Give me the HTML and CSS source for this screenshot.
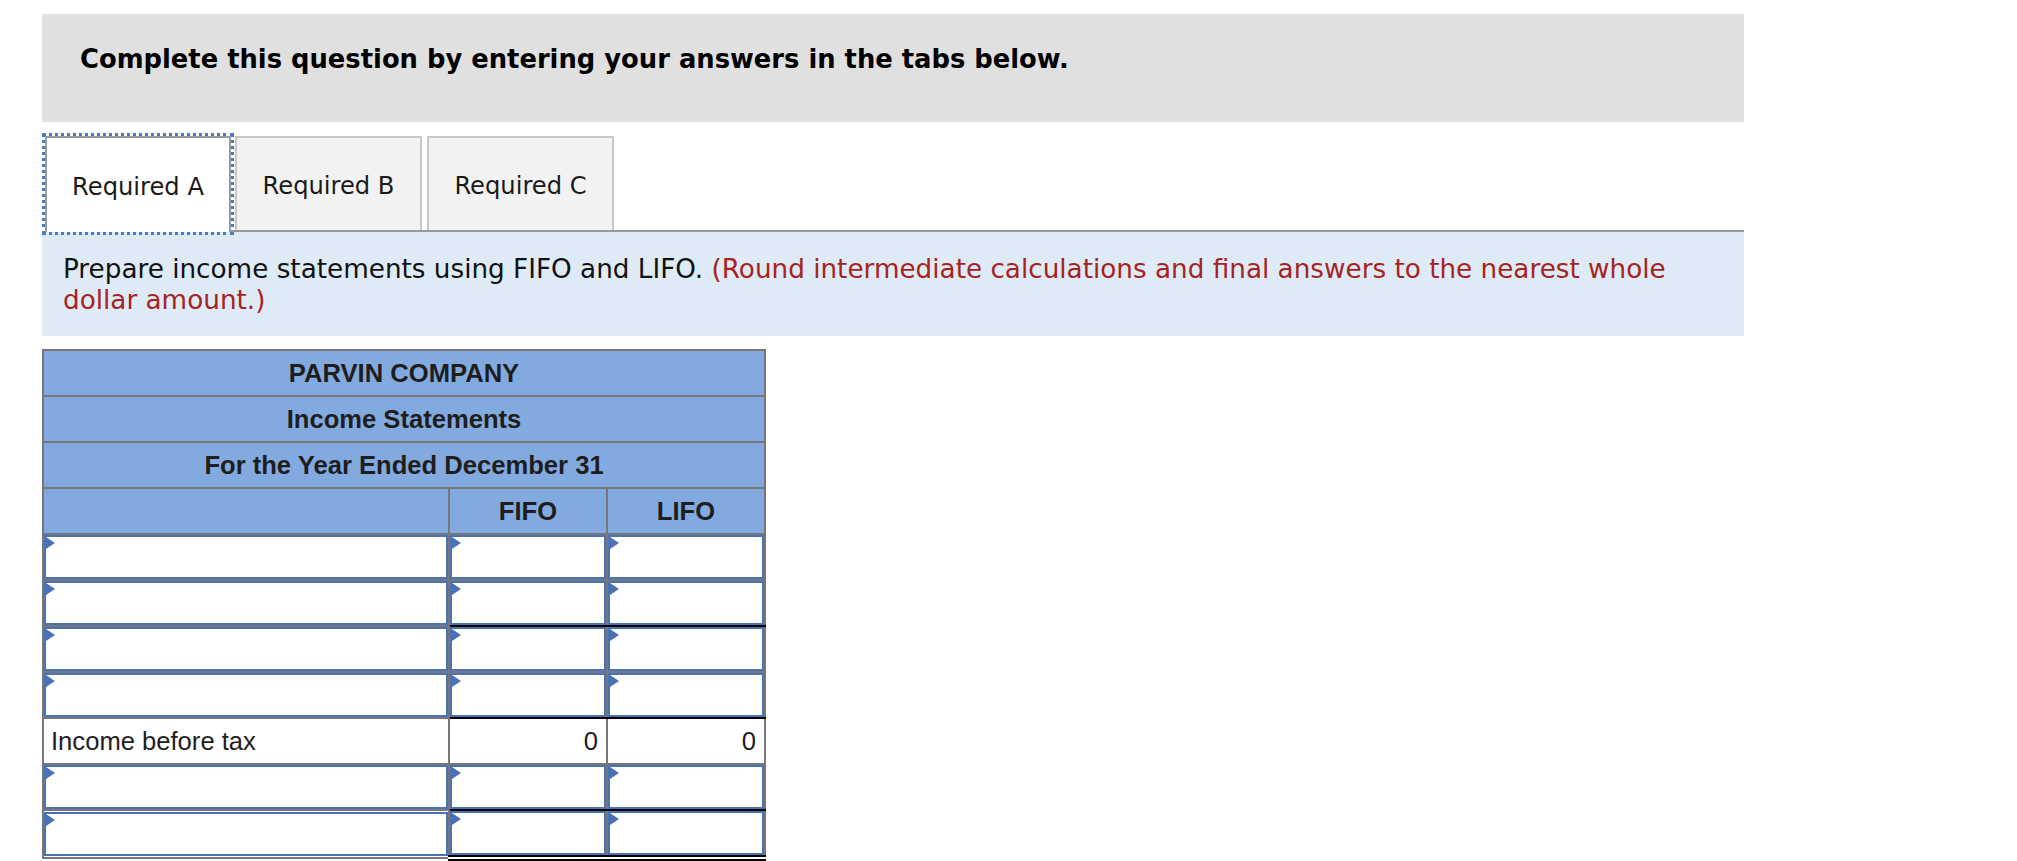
FILE: index.html
```html
<!DOCTYPE html>
<html>
<head>
<meta charset="utf-8">
<link rel="stylesheet" href="styles.css">
</head>
<body>
<div class="wrap">
  <div class="banner">Complete this question by entering your answers in the tabs below.</div>

  <div class="tabs">
    <div class="tab tab-active">Required A</div>
    <div class="tab-rest">
      <div class="tab">Required B</div>
      <div class="tab">Required C</div>
    </div>
  </div>

  <div class="instr">Prepare income statements using FIFO and LIFO. <span class="red">(Round intermediate calculations and final answers to the nearest whole dollar amount.)</span></div>

  <table class="stmt">
    <colgroup><col class="c1"><col class="c2"><col class="c3"></colgroup>
    <tr class="hd"><th colspan="3">PARVIN COMPANY</th></tr>
    <tr class="hd"><th colspan="3">Income Statements</th></tr>
    <tr class="hd"><th colspan="3">For the Year Ended December 31</th></tr>
    <tr class="hd"><th></th><th>FIFO</th><th>LIFO</th></tr>
    <tr><td><div class="inp"></div></td><td><div class="inp"></div></td><td><div class="inp"></div></td></tr>
    <tr class="ul"><td><div class="inp"></div></td><td><div class="inp"></div></td><td><div class="inp"></div></td></tr>
    <tr><td><div class="inp"></div></td><td><div class="inp"></div></td><td><div class="inp"></div></td></tr>
    <tr class="ul"><td><div class="inp"></div></td><td><div class="inp"></div></td><td><div class="inp"></div></td></tr>
    <tr class="calc"><td class="lbl">Income before tax</td><td class="num">0</td><td class="num">0</td></tr>
    <tr class="ul"><td><div class="inp"></div></td><td><div class="inp"></div></td><td><div class="inp"></div></td></tr>
    <tr class="dbl"><td><div class="inp"></div></td><td><div class="inp"></div></td><td><div class="inp"></div></td></tr>
  </table>
</div>
</body>
</html>
```

FILE: styles.css
```css
html, body {
  margin: 0;
  padding: 0;
  background: #ffffff;
}

.wrap {
  width: 1702px;
  margin-left: 42px;
  padding-top: 14px;
}

.banner {
  background: #e0e0e0;
  height: 108px;
  box-sizing: border-box;
  padding: 28px 0 0 38px;
  font-family: "DejaVu Sans", Verdana, sans-serif;
  font-weight: bold;
  font-size: 25.8px;
  line-height: 34px;
  color: #000;
}

.tabs {
  display: flex;
  align-items: stretch;
  margin-top: 14px;
}

.tab {
  width: 186px;
  height: 94px;
  box-sizing: border-box;
  display: flex;
  align-items: center;
  justify-content: center;
  padding-top: 4px;
  font-family: "DejaVu Sans", Verdana, sans-serif;
  font-size: 24.2px;
  color: #1a1a1a;
  background: #f2f2f2;
  border: 2px solid #c8c8c8;
  border-bottom: none;
}

.tab-active {
  background: #ffffff;
  border: 2px solid #9a9a9a;
  border-bottom: none;
  margin-left: 3px;
  height: 96px;
  outline: 3px dotted #4a78c2;
  outline-offset: 0;
}

.tab-rest {
  flex: 1;
  display: flex;
  gap: 5px;
  padding-left: 4px;
  border-bottom: 2px solid #9a9a9a;
}

.tab-rest .tab {
  width: 187px;
}

.instr {
  background: #deebf7;
  height: 104px;
  box-sizing: border-box;
  padding: 22px 40px 0 21px;
  font-family: "DejaVu Sans", Verdana, sans-serif;
  font-size: 26.25px;
  line-height: 31px;
  color: #111;
}

.red {
  color: #a6231f;
}

.stmt {
  margin-top: 13px;
  border-collapse: collapse;
  border: 2px solid #777;
  font-family: "Liberation Sans", Arial, sans-serif;
  font-size: 25.6px;
  color: #1e1e1e;
}

.c1 { width: 406px; }
.c2 { width: 158px; }
.c3 { width: 158px; }

.stmt th,
.stmt td {
  border: 2px solid #777;
  height: 46px;
  padding: 0;
  box-sizing: border-box;
}

.hd th {
  background: #83aade;
  font-weight: bold;
  text-align: center;
}

.inp {
  position: relative;
  height: 44px;
  box-sizing: border-box;
  border: 2px solid #4a72b5;
  background: #fff;
}

.inp::before {
  content: "";
  position: absolute;
  top: 0;
  left: 0;
  width: 0;
  height: 0;
  border-left: 9px solid #4a72b5;
  border-top: 6px solid transparent;
  border-bottom: 6px solid transparent;
}

.ul td:nth-child(2),
.ul td:nth-child(3) {
  border-bottom: 2px solid #000;
}

.dbl td:nth-child(2),
.dbl td:nth-child(3) {
  border-bottom: 6px double #000;
}

.calc td {
  background: #fff;
}

.lbl {
  padding-left: 7px !important;
  text-align: left;
}

.num {
  text-align: right;
  padding-right: 8px !important;
}
```
